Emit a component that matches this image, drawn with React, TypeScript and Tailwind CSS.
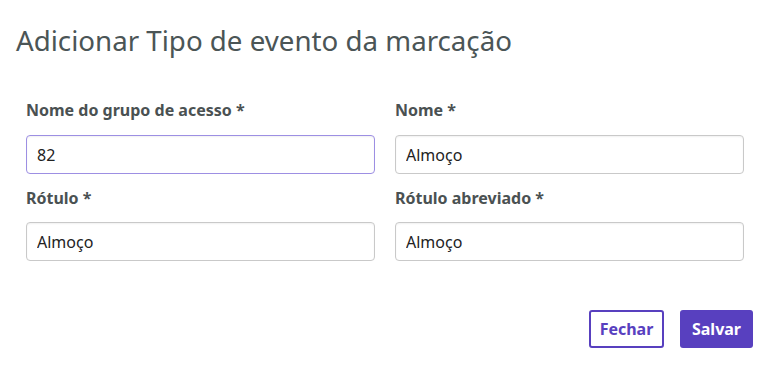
export default function App() {
  return (
    <div className="h-[369px] w-[769px] bg-white font-['Noto_Sans',sans-serif]">
      <div className="px-[16px] pt-[21px]">
        <h1 className="text-[27.7px] leading-[38px] font-normal text-[#4b5556]">Adicionar Tipo de evento da marcação</h1>
      </div>

      <div className="mt-[41px] grid grid-cols-2 gap-x-[20px] pl-[26px] pr-[25px]">
        <div className="flex flex-col">
          <label className="text-[16px] leading-[20px] font-bold text-[#4a5152]">Nome do grupo de acesso *</label>
          <input
            className="mt-[15px] h-[39px] rounded-[4px] border border-[#9d8fe3] px-[10px] text-[16px] text-[#222] outline-none shadow-[inset_0_1px_2px_rgba(0,0,0,0.06)]"
            defaultValue="82"
          />
        </div>
        <div className="flex flex-col">
          <label className="text-[16px] leading-[20px] font-bold text-[#4a5152]">Nome *</label>
          <input
            className="mt-[15px] h-[39px] rounded-[4px] border border-[#c9c9c9] px-[10px] text-[16px] text-[#222] outline-none shadow-[inset_0_1px_2px_rgba(0,0,0,0.06)]"
            defaultValue="Almoço"
          />
        </div>
        <div className="mt-[14px] flex flex-col">
          <label className="text-[16px] leading-[20px] font-bold text-[#4a5152]">Rótulo *</label>
          <input
            className="mt-[14px] h-[39px] rounded-[4px] border border-[#c9c9c9] px-[10px] text-[16px] text-[#222] outline-none shadow-[inset_0_1px_2px_rgba(0,0,0,0.06)]"
            defaultValue="Almoço"
          />
        </div>
        <div className="mt-[14px] flex flex-col">
          <label className="text-[16px] leading-[20px] font-bold text-[#4a5152]">Rótulo abreviado *</label>
          <input
            className="mt-[14px] h-[39px] rounded-[4px] border border-[#c9c9c9] px-[10px] text-[16px] text-[#222] outline-none shadow-[inset_0_1px_2px_rgba(0,0,0,0.06)]"
            defaultValue="Almoço"
          />
        </div>
      </div>

      {/* actions */}
      <div className="mt-[49px] flex justify-end gap-[16px] pr-[16px]">
        <button className="h-[38px] w-[75px] rounded-[3px] border-2 border-[#5840bf] bg-white text-[16px] font-bold text-[#5840bf]">
          Fechar
        </button>
        <button className="h-[38px] w-[73px] rounded-[3px] bg-[#5840bf] text-[16px] font-bold text-white">
          Salvar
        </button>
      </div>
    </div>
  )
}
